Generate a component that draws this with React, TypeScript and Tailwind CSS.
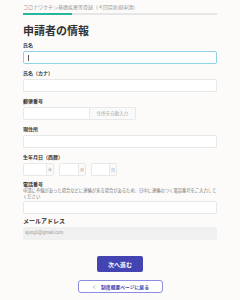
import { ChevronLeft } from "lucide-react";

const FONT = "font-['Noto_Sans_CJK_JP','Noto_Sans',sans-serif]";

function Label({ children, mt }: { children: React.ReactNode; mt: string }) {
  return <div className={`${mt} text-[5px] font-bold leading-[7px] text-[#333]`}>{children}</div>;
}

function Field({ focused = false }: { focused?: boolean }) {
  return (
    <div
      className={`h-[13px] w-full rounded-[2px] border bg-white ${
        focused ? "border-[#8fd3e6]" : "border-[#e8e8e8]"
      } flex items-center pl-[4px]`}
    >
      {focused && <div className="h-[6px] w-px bg-[#555]" />}
    </div>
  );
}

function DateBox({ unit, w }: { unit: string; w: string }) {
  return (
    <div className="flex h-[13px] overflow-hidden rounded-[2px] border border-[#e8e8e8]">
      <div className={`${w} bg-white`} />
      <div className="flex w-[7px] items-center justify-center border-l border-[#e8e8e8] bg-[#fafafa] text-[4px] text-[#999]">
        {unit}
      </div>
    </div>
  );
}

export default function App() {
  return (
    <div className={`${FONT} h-[300px] w-[240px] bg-[#fcfbfa] px-[23px] pt-[3px]`}>
      <div className="text-[5px] leading-[7px] text-[#9a9a9a]">コロナワクチン基礎疾患等登録（４回目新規申請）</div>

      <div className="mt-[3px] h-[2px] w-full bg-[#e6e6e6]">
        <div className="h-full w-[49px] bg-[#22b8a0]" />
      </div>

      <h1 className="mt-[9px] text-[11px] font-bold leading-[13px] text-[#333]">申請者の情報</h1>

      <Label mt="mt-[4px]">氏名</Label>
      <div className="mt-[3px]">
        <Field focused />
      </div>

      <Label mt="mt-[5px]">氏名（カナ）</Label>
      <div className="mt-[3px]">
        <Field />
      </div>

      <Label mt="mt-[5px]">郵便番号</Label>
      <div className="mt-[3px] flex">
        <div className="h-[13px] w-[67px] rounded-l-[2px] border border-[#e8e8e8] bg-white" />
        <div className="flex h-[13px] w-[46px] items-center justify-center rounded-r-[2px] border border-l-0 border-[#e8e8e8] bg-[#fafafa] text-[4.5px] text-[#aaa]">
          住所を自動入力
        </div>
      </div>

      <Label mt="mt-[5px]">現住所</Label>
      <div className="mt-[3px]">
        <Field />
      </div>

      <Label mt="mt-[5px]">生年月日（西暦）</Label>
      <div className="mt-[3px] flex gap-[5px]">
        <DateBox unit="年" w="w-[22px]" />
        <DateBox unit="月" w="w-[18px]" />
        <DateBox unit="日" w="w-[17px]" />
      </div>

      <Label mt="mt-[4px]">電話番号</Label>
      <div className="text-[4.3px] leading-[6px] text-[#777]">
        申請に不備があった場合などに連絡が来る場合があるため、日中に連絡のつく電話番号をご入力してください
      </div>
      <div className="mt-[2px]">
        <Field />
      </div>

      <div className="mt-[3px] text-[6px] font-bold leading-[8px] text-[#333]">メールアドレス</div>
      <div className="mt-[2px] flex h-[13px] w-full items-center rounded-[2px] bg-[#f0f0f0] pl-[2px] font-['Liberation_Sans',sans-serif] text-[4.5px] text-[#999]">
        sjung1@gmail.com
      </div>

      <div className="mt-[16px] flex flex-col items-center">
        <button className="flex h-[16px] w-[46px] items-center justify-center rounded-[2px] bg-[#4343b2] text-[6px] font-bold text-white">
          次へ進む
        </button>
        <button className="mt-[8px] flex h-[13px] w-[85px] items-center justify-center gap-[4px] rounded-[3px] border border-[#8d8de0] bg-white text-[4.8px] font-bold text-[#4343b2]">
          <ChevronLeft className="h-[6px] w-[6px]" strokeWidth={1.5} />
          制度概要ページに戻る
        </button>
      </div>
    </div>
  );
}
